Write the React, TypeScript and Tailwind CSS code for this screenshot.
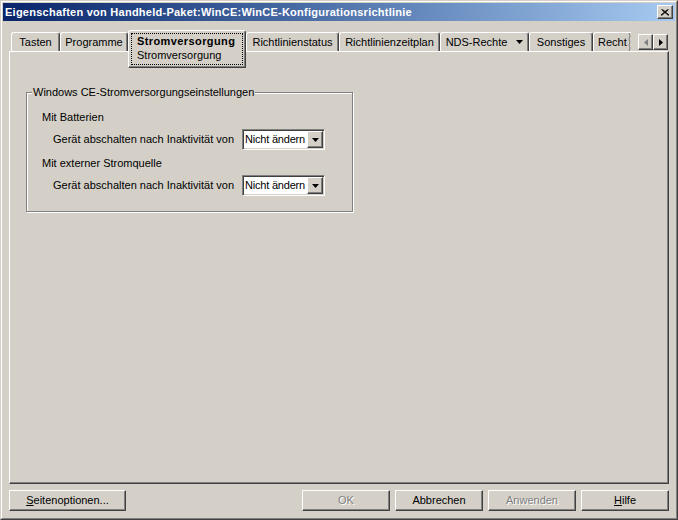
const raised =
  "border border-t-white border-l-white border-r-[#404040] border-b-[#404040] shadow-[inset_-1px_-1px_0_#808080]";
const sunken =
  "border border-t-[#808080] border-l-[#808080] border-r-white border-b-white shadow-[inset_1px_1px_0_#404040,inset_-1px_-1px_0_#d4d0c8]";
const tabBase =
  "h-[19px] shrink-0 flex items-center justify-center rounded-t-[3px] border-t border-l border-r border-t-white border-l-white border-r-[#404040] shadow-[inset_-1px_0_0_#808080]";

const tabsBefore = [
  { label: "Tasten", cls: "w-[49px]" },
  { label: "Programme", cls: "w-[68px]" },
];

const tabsAfter = [
  { label: "Richtlinienstatus", cls: "w-[93px]" },
  { label: "Richtlinienzeitplan", cls: "w-[101px]" },
  { label: "NDS-Rechte", cls: "w-[89px]", arrow: true },
  { label: "Sonstiges", cls: "w-[64px]" },
];

function Arrow({ dir, disabled }: { dir: "left" | "right" | "down"; disabled?: boolean }) {
  const pts = dir === "down" ? "0,0 7,0 3.5,4" : dir === "right" ? "0,0 4,3.5 0,7" : "4,0 0,3.5 4,7";
  const w = dir === "down" ? 7 : 4;
  const h = dir === "down" ? 4 : 7;
  return (
    <svg width={w} height={h} viewBox={`0 0 ${w} ${h}`} className="block">
      <polygon points={pts} fill={disabled ? "#808080" : "#000"} />
    </svg>
  );
}

function Combo() {
  return (
    <div className={`${sunken} w-[83px] h-[21px] bg-white flex items-stretch p-[1px]`}>
      <span className="flex-1 min-w-0 overflow-hidden whitespace-nowrap tracking-[-0.2px] pl-[1px] flex items-center bg-white">
        Nicht ändern
      </span>
      <div className={`${raised} w-[16px] shrink-0 bg-[#d4d0c8] flex items-center justify-center`}>
        <Arrow dir="down" />
      </div>
    </div>
  );
}

function PushButton({ children, cls, disabled }: { children: React.ReactNode; cls: string; disabled?: boolean }) {
  return (
    <button
      className={`${raised} ${cls} h-[21px] bg-[#d4d0c8] flex items-center justify-center ${
        disabled ? "text-[#808080] [text-shadow:1px_1px_0_#fff]" : "text-black"
      }`}
    >
      {children}
    </button>
  );
}

export default function App() {
  return (
    <div className="w-[678px] h-[520px] bg-[#d4d0c8] border border-t-[#d4d0c8] border-l-[#d4d0c8] border-r-[#404040] border-b-[#404040] font-['Liberation_Sans',Arial,sans-serif] text-[11px] leading-[13px] text-black select-none">
      <div className="w-full h-full border border-t-white border-l-white border-r-[#808080] border-b-[#808080] p-[1px] flex flex-col">
        {/* Title bar */}
        <div className="h-[18px] shrink-0 flex items-center justify-between bg-gradient-to-r from-[#0a246a] to-[#a6caf0] pl-[2px] pr-[2px]">
          <span className="font-bold text-white whitespace-nowrap tracking-[0.25px]">
            Eigenschaften von Handheld-Paket:WinCE:WinCE-Konfigurationsrichtlinie
          </span>
          <div className={`${raised} w-[16px] h-[14px] bg-[#d4d0c8] flex items-center justify-center`}>
            <svg width="8" height="7" viewBox="0 0 8 7" className="block">
              <path d="M0.5 0.5 L7.5 6.5 M7.5 0.5 L0.5 6.5 M1.5 0.5 L8.5 6.5 M6.5 0.5 L-0.5 6.5" stroke="#000" strokeWidth="1" />
            </svg>
          </div>
        </div>

        {/* Body */}
        <div className="flex flex-col px-[6px] pt-[9px]">
          {/* Tab row */}
          <div className="h-[21px] flex items-end pl-[2px]">
            {tabsBefore.map((t) => (
              <div key={t.label} className={`${tabBase} ${t.cls}`}>
                {t.label}
              </div>
            ))}
            <div className="relative z-10 w-[118px] h-[38px] mb-[-17px] shrink-0 bg-[#d4d0c8] rounded-t-[3px] border border-t-white border-l-white border-r-[#404040] border-b-[#404040] shadow-[inset_-1px_-1px_0_#808080] pt-[2px] px-[2px] pb-[2px]">
              <div className="h-full border border-dotted border-black flex flex-col items-start pl-[5px]">
                <span className="h-[14px] flex items-center font-bold tracking-[0.4px]">Stromversorgung</span>
                <span className="h-[15px] flex items-center">Stromversorgung</span>
              </div>
            </div>
            {tabsAfter.map((t) => (
              <div key={t.label} className={`${tabBase} ${t.cls} gap-[9px]`}>
                {t.label}
                {t.arrow && <Arrow dir="down" />}
              </div>
            ))}
            <div className="h-[19px] w-[38px] shrink-0 flex items-center rounded-tl-[3px] border-t border-l border-t-white border-l-white overflow-hidden pl-[4px] relative">
              <span className="whitespace-nowrap">Recht</span>
              <svg width="3" height="18" viewBox="0 0 3 18" className="absolute right-0 top-0">
                <path d="M1 0 L2 3 L1 6 L2 9 L1 12 L2 15 L1 18" stroke="#808080" fill="none" />
              </svg>
            </div>
            <div className="ml-[7px] mb-[1px] flex">
              <div className={`${raised} w-[15px] h-[16px] bg-[#d4d0c8] flex items-center justify-center`}>
                <Arrow dir="left" disabled />
              </div>
              <div className={`${raised} w-[15px] h-[16px] bg-[#d4d0c8] flex items-center justify-center`}>
                <Arrow dir="right" />
              </div>
            </div>
          </div>

          {/* Panel */}
          <div className={`${raised} w-[660px] h-[433px] pl-[16px] pt-[40px]`}>
            <div className="relative w-[327px] h-[120px] border border-[#808080] shadow-[1px_1px_0_#fff,inset_1px_1px_0_#fff] pt-[17px]">
              <span className="absolute left-[5px] top-[-7px] bg-[#d4d0c8] px-[1px] whitespace-nowrap">
                Windows CE-Stromversorgungseinstellungen
              </span>
              <div className="flex flex-col">
                <span className="h-[14px] flex items-center pl-[15px]">Mit Batterien</span>
                <div className="mt-[5px] flex items-center pl-[26px]">
                  <span className="w-[189px] whitespace-nowrap">Gerät abschalten nach Inaktivität von</span>
                  <Combo />
                </div>
                <span className="mt-[6px] h-[14px] flex items-center pl-[15px]">Mit externer Stromquelle</span>
                <div className="mt-[5px] flex items-center pl-[26px]">
                  <span className="w-[189px] whitespace-nowrap">Gerät abschalten nach Inaktivität von</span>
                  <Combo />
                </div>
              </div>
            </div>
          </div>

          {/* Buttons */}
          <div className="mt-[6px] flex items-center">
            <PushButton cls="w-[117px]">
              <span>
                <span className="underline">S</span>eitenoptionen...
              </span>
            </PushButton>
            <div className="flex-1" />
            <div className="flex gap-[5px]">
              <PushButton cls="w-[88px]" disabled>
                OK
              </PushButton>
              <PushButton cls="w-[88px]">Abbrechen</PushButton>
              <PushButton cls="w-[88px]" disabled>
                Anwenden
              </PushButton>
              <PushButton cls="w-[88px]">
                <span>
                  <span className="underline">H</span>ilfe
                </span>
              </PushButton>
            </div>
          </div>
        </div>
      </div>
    </div>
  );
}
